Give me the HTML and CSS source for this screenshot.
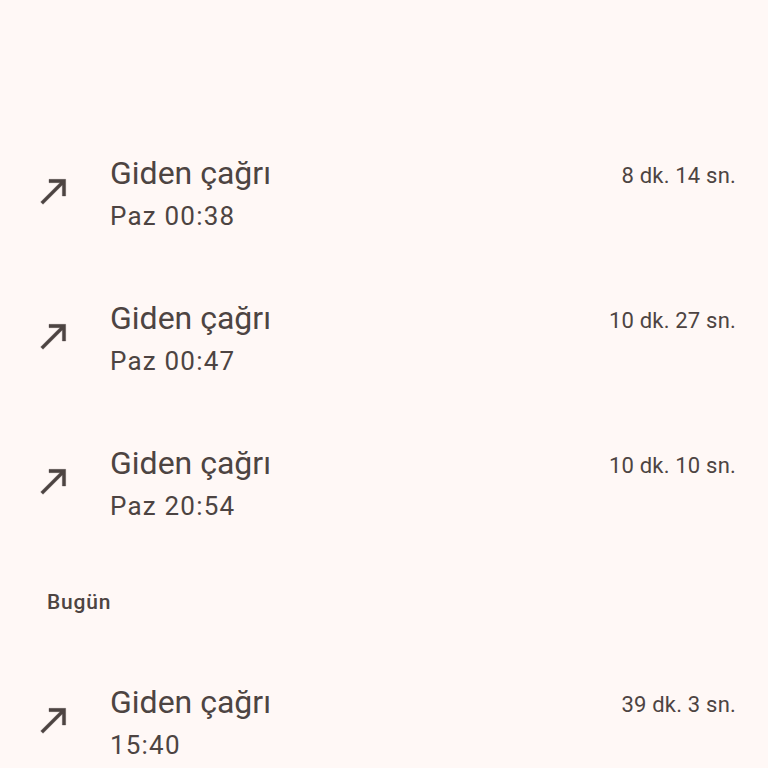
FILE: index.html
```html
<!DOCTYPE html>
<html lang="tr">
<head>
    <meta charset="UTF-8">
    <meta name="viewport" content="width=device-width, initial-scale=1.0">
    <title>Arama geçmişi</title>
    <link rel="stylesheet" href="styles.css">
</head>
<body>
    <div id="call-list">
        <div class="call-row">
            <svg class="call-icon" viewBox="0 0 24 24"><path d="M9 5v2h6.59L4 18.59 5.41 20 17 8.41V15h2V5z"/></svg>
            <div class="call-text">
                <div class="call-type">Giden çağrı</div>
                <div class="call-time">Paz 00:38</div>
            </div>
            <div class="call-dur">8 dk. 14 sn.</div>
        </div>
        <div class="call-row">
            <svg class="call-icon" viewBox="0 0 24 24"><path d="M9 5v2h6.59L4 18.59 5.41 20 17 8.41V15h2V5z"/></svg>
            <div class="call-text">
                <div class="call-type">Giden çağrı</div>
                <div class="call-time">Paz 00:47</div>
            </div>
            <div class="call-dur">10 dk. 27 sn.</div>
        </div>
        <div class="call-row">
            <svg class="call-icon" viewBox="0 0 24 24"><path d="M9 5v2h6.59L4 18.59 5.41 20 17 8.41V15h2V5z"/></svg>
            <div class="call-text">
                <div class="call-type">Giden çağrı</div>
                <div class="call-time">Paz 20:54</div>
            </div>
            <div class="call-dur">10 dk. 10 sn.</div>
        </div>
        <div class="day-head">Bugün</div>
        <div class="call-row">
            <svg class="call-icon" viewBox="0 0 24 24"><path d="M9 5v2h6.59L4 18.59 5.41 20 17 8.41V15h2V5z"/></svg>
            <div class="call-text">
                <div class="call-type">Giden çağrı</div>
                <div class="call-time">15:40</div>
            </div>
            <div class="call-dur">39 dk. 3 sn.</div>
        </div>
    </div>
</body>
</html>
```

FILE: styles.css
```css
* {box-sizing: border-box;}
html, body {margin: 0; height: 100%;}
body {
    background-color: #fff8f6;
    color: #4d4442;
    font-family: Roboto, "Noto Sans", sans-serif;
    overflow: hidden;
}
#call-list {padding-top: 122px;}

.call-row {
    display: flex;
    align-items: center;
    height: 145px;
    padding: 0 32px 0 34px;
}
.call-icon {
    width: 40px;
    height: 40px;
    fill: #4d4442;
    stroke: #4d4442;
    stroke-width: 0.2;
    margin-top: -7px;
    flex-shrink: 0;
}
.call-text {
    flex: 1;
    margin: 3px 0 0 36px;
}
.call-type {font-size: 32px; line-height: 40px;}
.call-time {font-size: 26px; line-height: 46px; letter-spacing: 1.2px;}
.call-dur {
    align-self: flex-start;
    margin-top: 40px;
    font-size: 22px;
    line-height: 28px;
    letter-spacing: 0.2px;
}

.day-head {
    height: 94px;
    padding: 33px 0 0 47px;
    font-size: 21px;
    font-weight: 500;
    line-height: 24px;
    letter-spacing: 0.8px;
}
```
